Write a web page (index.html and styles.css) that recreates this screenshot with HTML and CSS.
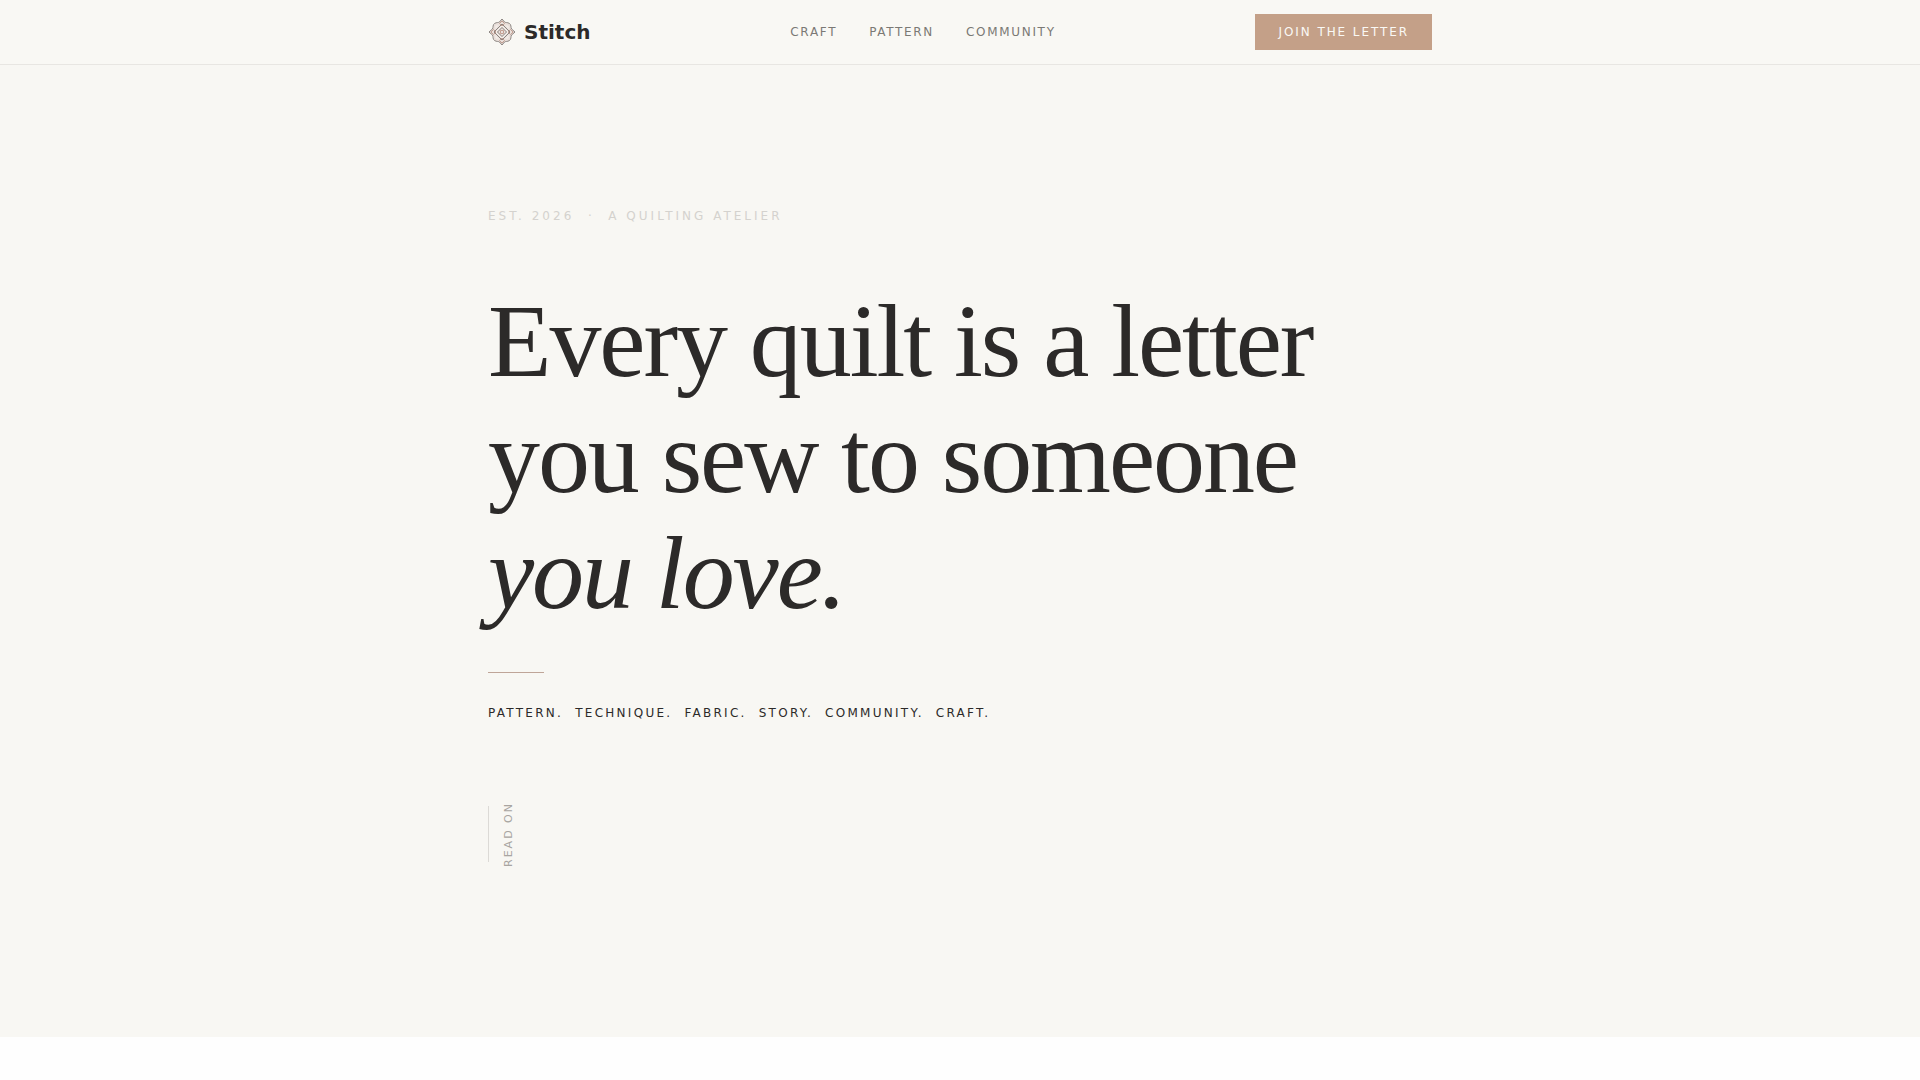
FILE: index.html
```html
<!DOCTYPE html>
<html lang="en">
  <head>
    <meta charset="UTF-8" />
    <meta name="viewport" content="width=device-width, initial-scale=1.0" />
    <title>Stitch</title>
    <link rel="stylesheet" href="styles.css">
  </head>
  <body>
    <header class="header">
      <div class="container header__inner">
        <a class="brand" href="#">
          <svg class="brand__mark" viewBox="0 0 56 56" fill="none" aria-hidden="true">
            <path class="mark-fill" d="M28 2l6 6 9 3 3 9 8 8-8 8-3 9-9 3-6 6-6-6-9-3-3-9-8-8 8-8 3-9 9-3z" />
            <path class="mark-grey" d="M28 2l5 6c3 2 5 0 10 3 4 3 2 7 4 11l7 6-7 6c-2 4 0 8-4 11-5 3-7 1-10 3l-5 6-5-6c-3-2-5 0-10-3-4-3-2-7-4-11l-7-6 7-6c2-4 0-8 4-11 5-3 7-1 10-3z" />
            <path class="mark-rose" d="M28 6l5 5-5 5-5-5zM28 40l5 5-5 5-5-5zM6 28l5-5 5 5-5 5zM40 28l5-5 5 5-5 5z" />
            <path class="mark-light" d="M16 21v-5h5M35 16h5v5M40 35v5h-5M21 40h-5v-5" />
            <path class="mark-grey" d="M28 12l16 16-16 16-16-16z" />
            <path class="mark-light" d="M28 16l12 12-12 12-12-12z" />
            <path class="mark-grey" d="M28 19l9 9-9 9-9-9z" />
            <path class="mark-rose" d="M25 25h6v6h-6z" />
          </svg>
          <span>Stitch</span>
        </a>
        <nav class="nav">
          <a href="#craft">Craft</a>
          <a href="#pattern">Pattern</a>
          <a href="#community">Community</a>
        </nav>
        <a class="btn" href="#letter">Join the letter</a>
      </div>
    </header>

    <main>
      <section class="hero">
        <div class="container">
          <p class="hero__eyebrow">Est. 2026 &nbsp;·&nbsp; A quilting atelier</p>
          <h1 class="hero__title">Every quilt is a letter<br>you sew to someone<br><em>you love.</em></h1>
          <hr class="hero__rule">
          <ul class="hero__topics">
            <li>Pattern.</li>
            <li>Technique.</li>
            <li>Fabric.</li>
            <li>Story.</li>
            <li>Community.</li>
            <li>Craft.</li>
          </ul>
          <a class="read-on" href="#craft"><span class="read-on__label">Read on</span></a>
        </div>
      </section>
      <section class="craft" id="craft"></section>
    </main>
  </body>
</html>
```
FILE: styles.css
```css
* {
  box-sizing: border-box;
}

body {
  margin: 0;
  background: #fefefe;
  color: #2c2a29;
  font-family: "DejaVu Sans", sans-serif;
  font-size: 12px;
  line-height: 20px;
}

a {
  color: inherit;
  text-decoration: none;
}

.container {
  width: 100%;
  max-width: 1000px;
  margin: 0 auto;
  padding: 0 28px;
}

/* Header */

.header {
  background: #f9f8f4;
  border-bottom: 1px solid #e8e6e2;
}

.header__inner {
  display: flex;
  align-items: center;
  justify-content: space-between;
  height: 64px;
}

.brand {
  display: flex;
  align-items: center;
  gap: 8px;
  font-size: 20px;
  font-weight: 700;
}

.brand__mark {
  width: 28px;
  height: 28px;
}

.mark-fill {
  fill: #eae0db;
}

.mark-grey {
  stroke: #8b8480;
  stroke-width: 2;
}

.mark-rose {
  stroke: #c39f92;
  stroke-width: 2;
}

.mark-light {
  stroke: #f6f1ed;
  stroke-width: 2;
}

.nav {
  display: flex;
  gap: 32px;
  color: #7b7975;
  letter-spacing: 0.14em;
  text-transform: uppercase;
}

.btn {
  padding: 7px 22px;
  border: 1px solid #c4a088;
  background: #c4a088;
  color: #faf9f5;
  letter-spacing: 0.16em;
  text-transform: uppercase;
}

/* Hero */

.hero {
  min-height: 90vh;
  padding: 140px 0;
  background: #f8f7f3;
}

.hero__eyebrow {
  margin: 0 0 56px;
  color: #d4d2ce;
  line-height: 22px;
  letter-spacing: 3px;
  text-transform: uppercase;
}

.hero__title {
  margin: 0 0 41px;
  font-family: "Liberation Serif", serif;
  font-size: 104px;
  font-weight: 400;
  line-height: 116px;
  letter-spacing: -0.02em;
}

.hero__rule {
  width: 56px;
  height: 1px;
  margin: 0 0 30px;
  border: 0;
  background: #bfa598;
}

.hero__topics {
  display: flex;
  flex-wrap: wrap;
  gap: 12px;
  margin: 0 0 79px;
  padding: 0;
  list-style: none;
  letter-spacing: 0.19em;
  text-transform: uppercase;
}

.read-on {
  display: inline-flex;
  align-items: center;
  gap: 12px;
  color: #a8a5a1;
  font-size: 11px;
  line-height: 16px;
  letter-spacing: 2px;
  text-transform: uppercase;
}

.read-on::before {
  content: "";
  width: 1px;
  height: 56px;
  background: #dcdad6;
}

.read-on__label {
  writing-mode: vertical-rl;
  transform: rotate(180deg);
}

.craft {
  min-height: 100vh;
}
```
